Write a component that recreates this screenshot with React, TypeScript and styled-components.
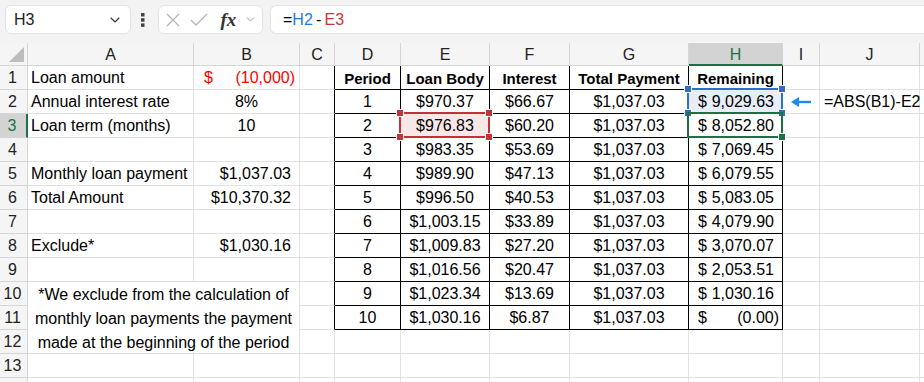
import React from 'react'
import styled, { createGlobalStyle, css } from 'styled-components'
import { ChevronDown } from 'lucide-react'

const GRID = '#e1e1e1'
const HEAD_LINE = '#d6d6d6'
const GREEN = '#1e7145'

const GlobalStyle = createGlobalStyle`
  html, body { margin: 0; padding: 0; background: #fff; overflow: hidden; }
  body { font-family: 'Liberation Sans', Arial, sans-serif; color: #000; }
`

const colWidths = '28px 166px 106px 35px 66px 89px 80px 119px 94px 37px 100px 1fr'
const letters = ['A', 'B', 'C', 'D', 'E', 'F', 'G', 'H', 'I', 'J', '']

const tableHead = ['Period', 'Loan Body', 'Interest', 'Total Payment', 'Remaining']
const tableRows: [string, string, string, string, string][] = [
  ['1', '$970.37', '$66.67', '$1,037.03', '9,029.63'],
  ['2', '$976.83', '$60.20', '$1,037.03', '8,052.80'],
  ['3', '$983.35', '$53.69', '$1,037.03', '7,069.45'],
  ['4', '$989.90', '$47.13', '$1,037.03', '6,079.55'],
  ['5', '$996.50', '$40.53', '$1,037.03', '5,083.05'],
  ['6', '$1,003.15', '$33.89', '$1,037.03', '4,079.90'],
  ['7', '$1,009.83', '$27.20', '$1,037.03', '3,070.07'],
  ['8', '$1,016.56', '$20.47', '$1,037.03', '2,053.51'],
  ['9', '$1,023.34', '$13.69', '$1,037.03', '1,030.16'],
  ['10', '$1,030.16', '$6.87', '$1,037.03', '(0.00)'],
]

type Align = 'left' | 'center' | 'right'

const Toolbar = styled.div`
  height: 43px;
  box-sizing: border-box;
  background: #f3f3f3;
  display: flex;
  align-items: flex-start;
  padding: 5px 0 0 5px;
`
const Box = styled.div`
  height: 29px;
  box-sizing: border-box;
  background: #fff;
  border: 1px solid #e3e3e3;
  border-radius: 6px;
  display: flex;
  align-items: center;
`
const NameBox = styled(Box)`
  width: 126px;
  padding: 0 7px 0 8px;
  justify-content: space-between;
  font-size: 16px;
  color: #222;
`
const Dots = styled.div`
  width: 27px;
  height: 29px;
  display: flex;
  align-items: center;
  justify-content: center;
  padding-right: 4px;
  box-sizing: border-box;
`
const FxBox = styled(Box)`
  width: 105px;
  padding: 0 5px 0 6px;
  justify-content: space-between;
`
const Fx = styled.span`
  font-family: 'Liberation Serif', 'DejaVu Serif', serif;
  font-style: italic;
  font-weight: bold;
  font-size: 19px;
  color: #333;
  margin-left: 4px;
`
const FormulaBox = styled(Box)`
  flex: 1;
  margin-left: 7px;
  border-right: none;
  border-radius: 6px 0 0 6px;
  padding-left: 12px;
  font-size: 16px;
`
const Ref = styled.span<{ $c: string }>`
  color: ${(p) => p.$c};
`

const Sheet = styled.div`
  display: grid;
  grid-template-columns: ${colWidths};
  grid-template-rows: 23px repeat(14, 24px);
  height: calc(100vh - 43px);
  overflow: hidden;
  font-size: 16px;
`
const Corner = styled.div`
  background: #f5f5f5;
  border-right: 1px solid ${HEAD_LINE};
  border-bottom: 1px solid ${HEAD_LINE};
  position: relative;
  &::after {
    content: '';
    position: absolute;
    right: 3px;
    bottom: 3px;
    width: 0;
    height: 0;
    border-left: 15px solid transparent;
    border-bottom: 15px solid #bdbdbd;
  }
`
const ColHead = styled.div<{ $active?: boolean }>`
  background: ${(p) => (p.$active ? '#d3d3d3' : '#f5f5f5')};
  color: ${(p) => (p.$active ? GREEN : '#222')};
  border-right: 1px solid ${HEAD_LINE};
  border-bottom: 1px solid ${HEAD_LINE};
  display: flex;
  align-items: center;
  justify-content: center;
  font-size: 16px;
  box-sizing: border-box;
  padding-top: 1px;
  ${(p) =>
    p.$active &&
    css`
      border-bottom: 2px solid ${GREEN};
      padding-top: 2px;
    `}
`
const RowHead = styled.div<{ $active?: boolean }>`
  background: ${(p) => (p.$active ? '#d3d3d3' : '#f5f5f5')};
  color: ${(p) => (p.$active ? GREEN : '#222')};
  border-right: ${(p) => (p.$active ? `2px solid ${GREEN}` : `1px solid ${HEAD_LINE}`)};
  border-bottom: 1px solid ${HEAD_LINE};
  display: flex;
  align-items: center;
  justify-content: center;
  padding: 1px 2px 0 0;
  box-sizing: border-box;
  font-size: 16px;
`
const Cell = styled.div<{
  $align?: Align
  $bold?: boolean
  $color?: string
  $rb?: string
  $bb?: string
  $bg?: string
}>`
  position: relative;
  box-sizing: border-box;
  display: flex;
  align-items: center;
  justify-content: ${(p) =>
    p.$align === 'center' ? 'center' : p.$align === 'right' ? 'flex-end' : 'flex-start'};
  padding: 1px 4px 0;
  white-space: nowrap;
  font-weight: ${(p) => (p.$bold ? 'bold' : 'normal')};
  color: ${(p) => p.$color || '#000'};
  background: ${(p) => p.$bg || '#fff'};
  border-right: 1px solid ${(p) => p.$rb || GRID};
  border-bottom: 1px solid ${(p) => p.$bb || GRID};
`
const Label = styled(Cell)`
  padding-left: 3px;
`
const Header = styled(Cell)`
  font-size: 15px;
`
const Money = styled(Cell)`
  justify-content: space-between;
  padding: 1px 8px 0 9px;
`
const Merged = styled.div`
  grid-column: span 2;
  grid-row: span 3;
  border-right: 1px solid ${GRID};
  border-bottom: 1px solid ${GRID};
  display: flex;
  flex-direction: column;
  align-items: center;
  padding-top: 1px;
  line-height: 24px;
  font-size: 16px;
`
const Selection = styled.div<{ $c: string }>`
  position: absolute;
  left: -2px;
  top: -2px;
  right: -1px;
  bottom: -1px;
  border: 2px solid ${(p) => p.$c};
  pointer-events: none;
  z-index: 2;
`
const Handle = styled.span<{ $c: string; $pos: string }>`
  position: absolute;
  width: 6px;
  height: 6px;
  background: ${(p) => p.$c};
  border: 1px solid #fff;
  ${(p) => (p.$pos.includes('t') ? 'top: -5px;' : 'bottom: -5px;')}
  ${(p) => (p.$pos.includes('l') ? 'left: -5px;' : 'right: -5px;')}
`
const ArrowCell = styled(Cell)`
  justify-content: center;
  padding: 0;
`

const Corners = ({ c }: { c: string }) => (
  <>
    {['tl', 'tr', 'bl', 'br'].map((pos) => (
      <Handle key={pos} $c={c} $pos={pos} />
    ))}
  </>
)

const Empty = ({ rb, bb }: { rb?: string; bb?: string }) => <Cell $rb={rb} $bb={bb} />

const leftData: Record<number, [string, string, Align]> = {
  2: ['Annual interest rate', '8%', 'center'],
  3: ['Loan term (months)', '10', 'center'],
  5: ['Monthly loan payment', '$1,037.03', 'right'],
  6: ['Total Amount', '$10,370.32', 'right'],
  8: ['Exclude*', '$1,030.16', 'right'],
}

const App = () => {
  const rows: React.ReactNode[] = []

  for (let r = 1; r <= 14; r++) {
    const cells: React.ReactNode[] = []
    cells.push(
      <RowHead key={`h${r}`} $active={r === 3}>
        {r <= 13 ? r : ''}
      </RowHead>
    )
    const inTable = r <= 11

    // columns A and B
    if (r === 10) {
      cells.push(
        <Merged key="m">
          <span>*We exclude from the calculation of</span>
          <span>monthly loan payments the payment</span>
          <span>made at the beginning of the period</span>
        </Merged>
      )
    } else if (r === 11 || r === 12) {
      // covered by the merged cell
    } else if (r === 1) {
      cells.push(<Label key="a">Loan amount</Label>)
      cells.push(
        <Money key="b" $color="#ff0000" style={{ paddingLeft: 10, paddingRight: 4 }}>
          <span>$</span>
          <span>(10,000)</span>
        </Money>
      )
    } else {
      const d = leftData[r]
      cells.push(<Label key="a">{d ? d[0] : ''}</Label>)
      cells.push(
        <Cell
          key="b"
          $align={d ? d[2] : 'left'}
          style={d && d[2] === 'right' ? { paddingRight: 8 } : undefined}
        >
          {d ? d[1] : ''}
        </Cell>
      )
    }

    // column C
    cells.push(<Empty key="c" rb={inTable ? '#000' : undefined} />)

    // D..H
    if (r === 1) {
      tableHead.forEach((t) =>
        cells.push(
          <Header key={t} $align="center" $bold $rb="#000" $bb="#000">
            {t}
          </Header>
        )
      )
    } else if (inTable) {
      const [p, body, int, total, rem] = tableRows[r - 2]
      cells.push(
        <Cell key="d" $align="center" $rb="#000" $bb="#000">
          {p}
        </Cell>
      )
      cells.push(
        <Cell key="e" $align="center" $rb="#000" $bb="#000" $bg={r === 3 ? '#f9e7e8' : undefined}>
          {body}
          {r === 3 && (
            <Selection $c="#c4313b">
              <Corners c="#c4313b" />
            </Selection>
          )}
        </Cell>
      )
      cells.push(
        <Cell key="f" $align="center" $rb="#000" $bb="#000">
          {int}
        </Cell>
      )
      cells.push(
        <Cell key="g" $align="center" $rb="#000" $bb="#000">
          {total}
        </Cell>
      )
      cells.push(
        <Money
          key="h"
          $rb="#000"
          $bb="#000"
          $bg={r === 2 ? '#e8eef9' : undefined}
          style={r === 11 ? { paddingRight: 3 } : undefined}
        >
          <span>$</span>
          <span>{rem}</span>
          {r === 2 && (
            <Selection $c="#2f6ecf">
              <Corners c="#2f6ecf" />
            </Selection>
          )}
          {r === 3 && (
            <Selection $c={GREEN}>
              <Handle $c={GREEN} $pos="br" />
            </Selection>
          )}
        </Money>
      )
    } else {
      ;['d', 'e', 'f', 'g', 'h'].forEach((k) => cells.push(<Empty key={k} />))
    }

    // I, J and the cut-off column
    if (r === 2) {
      cells.push(
        <ArrowCell key="i">
          <svg width="22" height="12" viewBox="0 0 22 12">
            <path d="M21 6H7" stroke="#1b8cf0" strokeWidth="2.4" />
            <path d="M1 6 9 1v10z" fill="#1b8cf0" />
          </svg>
        </ArrowCell>
      )
      cells.push(<Cell key="j">=ABS(B1)-E2</Cell>)
    } else {
      cells.push(<Empty key="i" />)
      cells.push(<Empty key="j" />)
    }
    cells.push(<Empty key="k" />)
    rows.push(<React.Fragment key={r}>{cells}</React.Fragment>)
  }

  return (
    <>
      <GlobalStyle />
      <Toolbar>
        <NameBox>
          <span>H3</span>
          <ChevronDown size={16} color="#333" strokeWidth={1.6} />
        </NameBox>
        <Dots>
          <svg width="4" height="14" viewBox="0 0 4 14">
            <rect x="0" y="0" width="3.5" height="3.5" fill="#444" />
            <rect x="0" y="5.2" width="3.5" height="3.5" fill="#444" />
            <rect x="0" y="10.4" width="3.5" height="3.5" fill="#444" />
          </svg>
        </Dots>
        <FxBox>
          <svg width="16" height="16" viewBox="0 0 16 16">
            <path d="M2 2l12 12M14 2 2 14" stroke="#b5b5b5" strokeWidth="1.3" />
          </svg>
          <svg width="20" height="16" viewBox="0 0 20 16">
            <path d="M2 8l5 5L18 2" fill="none" stroke="#b5b5b5" strokeWidth="1.3" />
          </svg>
          <Fx>fx</Fx>
          <ChevronDown size={13} color="#888" strokeWidth={1.5} />
        </FxBox>
        <FormulaBox>
          <span>=</span>
          <Ref $c="#1a7ee0">H2</Ref>
          <span>&thinsp;-&thinsp;</span>
          <Ref $c="#d13438">E3</Ref>
        </FormulaBox>
      </Toolbar>
      <Sheet>
        <Corner />
        {letters.map((l, i) => (
          <ColHead key={i} $active={l === 'H'}>
            {l}
          </ColHead>
        ))}
        {rows}
      </Sheet>
    </>
  )
}

export default App
